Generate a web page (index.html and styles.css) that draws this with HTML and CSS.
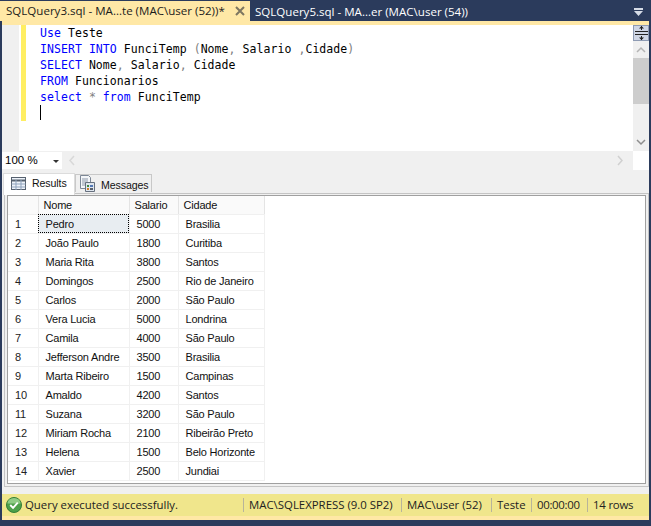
FILE: index.html
```html
<!DOCTYPE html>
<html lang="en">
<head>
    <meta charset="UTF-8">
    <meta name="viewport" content="width=device-width, initial-scale=1.0">
    <title>SQLQuery3.sql</title>
    <link rel="stylesheet" href="styles.css">
</head>
<body>
    <div class="window">
        <div class="doc-tabs">
            <div class="doc-tab active">
                <span>SQLQuery3.sql - MA...te (MAC\user (52))*</span>
                <svg class="close" width="10" height="10" viewBox="0 0 10 10"><path d="M1 1l8 8M9 1l-8 8" stroke="#7d7660" stroke-width="2"/></svg>
            </div>
            <div class="doc-tab">SQLQuery5.sql - MA...er (MAC\user (54))</div>
            <svg class="tab-menu" width="9" height="9" viewBox="0 0 9 9"><path d="M0 1h9v2H0zM0 4h9L4.500 9z" fill="#d5dbe6"/></svg>
        </div>
        <div class="doc-line"></div>

        <div class="editor">
            <div class="gutter"></div>
            <div class="code-area">
                <div class="changed"></div>
                <pre class="code"><span class="kw">Use</span> Teste
<span class="kw">INSERT INTO</span> FunciTemp <span class="op">(</span>Nome<span class="op">,</span> Salario <span class="op">,</span>Cidade<span class="op">)</span>
<span class="kw">SELECT</span> Nome<span class="op">,</span> Salario<span class="op">,</span> Cidade
<span class="kw">FROM</span> Funcionarios
<span class="kw">select</span> <span class="op">*</span> <span class="kw">from</span> FunciTemp
<span class="caret"></span></pre>
            </div>
            <div class="vscroll">
                <div class="split-btn">
                    <svg width="13" height="14" viewBox="0 0 13 14"><path d="M0 5.500h13M0 8.500h13M6.500 0v4M6.500 10v4" stroke="#222" fill="none"/><path d="M4 2.500h5L6.500 0zM4 11.500h5L6.500 14z" fill="#222"/></svg>
                </div>
                <svg class="arrow" width="16" height="17" viewBox="0 0 16 17"><path d="M4 11l4-4 4 4" stroke="#b4b4b4" stroke-width="1.500" fill="none"/></svg>
                <div class="thumb"></div>
                <div class="track"></div>
                <svg class="arrow" width="16" height="17" viewBox="0 0 16 17"><path d="M4 6l4 4 4-4" stroke="#8e8e8e" stroke-width="1.500" fill="none"/></svg>
            </div>
        </div>

        <div class="zoom-row">
            <div class="zoom-box">100 %<span class="zoom-drop"></span></div>
            <svg class="hleft" width="10" height="11" viewBox="0 0 10 11"><path d="M7 1L3 5.500 7 10" stroke="#d8d8d8" stroke-width="1.500" fill="none"/></svg>
            <svg class="hright" width="10" height="11" viewBox="0 0 10 11"><path d="M3 1l4 4.500L3 10" stroke="#d0d0d0" stroke-width="1.500" fill="none"/></svg>
            <div class="corner"></div>
        </div>

        <div class="results">
            <div class="result-tabs">
                <div class="result-tab active">
                    <svg width="15" height="13" viewBox="0 0 15 13"><rect x=".5" y=".5" width="14" height="12" fill="#eef3fa" stroke="#55606e"/><path d="M.5 3.500h14" stroke="#55606e" stroke-width="2"/><path d="M.5 7h14M.5 10h14M5 3v10M10 3v10" stroke="#8fa3bd"/></svg>
                    Results
                </div>
                <div class="result-tab">
                    <svg width="15" height="17" viewBox="0 0 15 17"><path d="M.5.500h8l2 2v11H.5z" fill="#f4f6f9" stroke="#7c8796"/><path d="M2 4h6M2 6h6M2 8h6M2 10h6" stroke="#8d99aa"/><path d="M5.500 7.500h9v9h-9z" fill="#dfe6ef" stroke="#66707e"/><path d="M7 10h2v2H7z" fill="#3d8a3d"/><path d="M10 10h3v2h-3z" fill="#5378b5"/><path d="M7 13h2v2H7z" fill="#d07a2c"/><path d="M10 13h3v2h-3z" fill="#58606c"/></svg>
                    Messages
                </div>
            </div>
            <div class="grid-frame">
                <div class="grid-pane">
                    <table class="grid">
                        <colgroup><col class="c-num"><col class="c-nome"><col class="c-sal"><col class="c-cid"></colgroup>
                        <thead>
                            <tr><th></th><th>Nome</th><th>Salario</th><th>Cidade</th></tr>
                        </thead>
                        <tbody>
                            <tr><td>1</td><td class="selected">Pedro</td><td>5000</td><td>Brasilia</td></tr>
                            <tr><td>2</td><td>João Paulo</td><td>1800</td><td>Curitiba</td></tr>
                            <tr><td>3</td><td>Maria Rita</td><td>3800</td><td>Santos</td></tr>
                            <tr><td>4</td><td>Domingos</td><td>2500</td><td>Rio de Janeiro</td></tr>
                            <tr><td>5</td><td>Carlos</td><td>2000</td><td>São Paulo</td></tr>
                            <tr><td>6</td><td>Vera Lucia</td><td>5000</td><td>Londrina</td></tr>
                            <tr><td>7</td><td>Camila</td><td>4000</td><td>São Paulo</td></tr>
                            <tr><td>8</td><td>Jefferson Andre</td><td>3500</td><td>Brasilia</td></tr>
                            <tr><td>9</td><td>Marta Ribeiro</td><td>1500</td><td>Campinas</td></tr>
                            <tr><td>10</td><td>Amaldo</td><td>4200</td><td>Santos</td></tr>
                            <tr><td>11</td><td>Suzana</td><td>3200</td><td>São Paulo</td></tr>
                            <tr><td>12</td><td>Miriam Rocha</td><td>2100</td><td>Ribeirão Preto</td></tr>
                            <tr><td>13</td><td>Helena</td><td>1500</td><td>Belo Horizonte</td></tr>
                            <tr><td>14</td><td>Xavier</td><td>2500</td><td>Jundiai</td></tr>
                        </tbody>
                    </table>
                </div>
            </div>
        </div>

        <div class="status">
            <svg class="ok" width="16" height="16" viewBox="0 0 17 17"><circle cx="8.500" cy="8.500" r="8" fill="#4da04a" stroke="#2f7a33"/><path d="M1.500 7a7 6 0 0 1 14 0z" fill="#8fcb85"/><path d="M4.500 8.500l3 3 5-5.500" stroke="#fff" stroke-width="2" fill="none"/></svg>
            <span class="status-msg">Query executed successfully.</span>
            <span class="cell s-server">MAC\SQLEXPRESS (9.0 SP2)</span>
            <span class="cell s-user">MAC\user (52)</span>
            <span class="cell s-db">Teste</span>
            <span class="cell s-time">00:00:00</span>
            <span class="cell s-rows">14 rows</span>
        </div>
        <div class="status-line"></div>
    </div>
</body>
</html>
```

FILE: styles.css
```css
* {
    margin: 0;
    padding: 0;
    box-sizing: border-box;
}
html, body {
    height: 100%;
}
body {
    background-color: #2b3b5c;
    overflow: hidden;
}
.window {
    height: 526px;
    padding: 0 2px 6px 2px;
    display: flex;
    flex-direction: column;
}

/* document tabs */
.doc-tabs {
    height: 21px;
    margin-left: -2px;
    display: flex;
    align-items: stretch;
    font: 11.55px "Open Sans", "Noto Sans", sans-serif;
    color: #fff;
    position: relative;
}
.doc-tab {
    padding-left: 5px;
    line-height: 24px;
    white-space: nowrap;
}
.doc-tab.active {
    width: 250px;
    margin-top: 1px;
    line-height: 22px;
    background-color: #ffe8a6;
    color: #1b1b1b;
    padding-left: 6px;
    display: flex;
    justify-content: space-between;
    align-items: center;
    padding-right: 5px;
}
.tab-menu {
    position: absolute;
    right: 6px;
    top: 7px;
}
.doc-line {
    height: 4px;
    background-color: #ffe8a6;
}

/* editor */
.editor {
    height: 126px;
    display: flex;
    background-color: #fff;
}
.gutter {
    width: 17px;
    background-color: #f0f0f0;
}
.code-area {
    flex: 1;
    display: flex;
    align-items: flex-start;
}
.changed {
    width: 5px;
    height: 96px;
    margin-left: 2px;
    background-color: #ffee62;
}
.code {
    margin-left: 14px;
    font: 11.5px/16px "DejaVu Sans Mono", "Liberation Mono", monospace;
    letter-spacing: .06px;
    color: #000;
}
.kw {
    color: #0000ff;
}
.op {
    color: #808080;
}
.caret {
    display: inline-block;
    width: 1px;
    height: 15px;
    background-color: #000;
    vertical-align: top;
}
.vscroll {
    width: 16px;
    display: flex;
    flex-direction: column;
    background-color: #f0f0f0;
}
.split-btn {
    height: 16px;
    background-color: #cfd6e5;
    border: 1px solid #8e9bb3;
    display: flex;
    justify-content: center;
    align-items: center;
}
.split-btn svg {
    flex: none;
}
.arrow {
    flex: none;
}
.thumb {
    height: 46px;
    background-color: #cdcdcd;
}
.track {
    flex: 1;
}

/* zoom row */
.zoom-row {
    height: 19px;
    display: flex;
    align-items: center;
    background-color: #f0f0f0;
}
.zoom-box {
    width: 60px;
    height: 17px;
    background-color: #fff;
    font: 11.5px/17px "Liberation Sans", sans-serif;
    padding-left: 3px;
    position: relative;
}
.zoom-drop {
    position: absolute;
    right: 3px;
    top: 8px;
    border: 3px solid transparent;
    border-top: 3px solid #333;
    border-bottom: 0;
}
.hleft {
    margin-left: 5px;
}
.hright {
    margin-left: auto;
    margin-right: 8px;
}
.corner {
    width: 16px;
    height: 19px;
    background-color: #fff;
}

/* results */
.results {
    flex: 1;
    min-height: 0;
    display: flex;
    flex-direction: column;
    background-color: #f0f0f0;
    padding-bottom: 7px;
}
.result-tabs {
    height: 23px;
    padding: 2px 0 0 1px;
    display: flex;
    align-items: flex-end;
    font: 10.6px "Liberation Sans", sans-serif;
    letter-spacing: -.1px;
    color: #111;
    position: relative;
    z-index: 1;
}
.result-tab {
    height: 18px;
    width: 77px;
    background-color: #f0f0f0;
    border: 1px solid #c8c8c8;
    border-bottom: 0;
    display: flex;
    align-items: center;
    gap: 6px;
    padding: 2px 0 0 4px;
    margin-bottom: 1px;
}
.result-tab svg {
    flex: none;
    margin-top: -2px;
}
.result-tab.active {
    width: 72px;
    height: 22px;
    background-color: #fff;
    border-color: #dcdcdc;
    padding: 0 0 3px 7px;
    gap: 6px;
    margin-bottom: -2px;
}
.result-tab.active svg {
    margin-top: 0;
}
.grid-frame {
    flex: 1;
    margin-left: 2px;
    border: 1px solid #c4c4c4;
    background-color: #f0f0f0;
    padding: 1px 2px 2px 2px;
}
.grid-pane {
    height: 100%;
    background-color: #fff;
    border: 1px solid #a0a0a0;
}
.grid {
    border-collapse: collapse;
    table-layout: fixed;
    width: 256px;
    font: 11px "Liberation Sans", sans-serif;
    letter-spacing: -.2px;
    color: #111;
}
.c-num { width: 30px; }
.c-nome { width: 91px; }
.c-sal { width: 49px; }
.c-cid { width: 86px; }
.grid th, .grid td {
    height: 19px;
    border: 1px solid #f0f0f0;
    border-top: 0;
    border-left: 0;
    text-align: left;
    font-weight: normal;
    white-space: nowrap;
    overflow: hidden;
}
.grid th {
    height: 18px;
    padding: 1px 0 0 5px;
    background-color: #fafafa;
    border-right: 1px solid #e4e4e4;
}
.grid td {
    padding-left: 7px;
}
.grid td:first-child {
    padding-left: 7px;
    color: #222;
}
.grid td.selected {
    background-color: #e8edf1;
    outline: 1px dotted #000;
    outline-offset: -1px;
}

/* status bar */
.status {
    height: 22px;
    background-color: #f0e68c;
    display: flex;
    align-items: center;
    padding: 0 0 1px 4px;
    font: 11.4px "Open Sans", "Noto Sans", sans-serif;
    color: #222;
}
.ok {
    flex: none;
}
.status-msg {
    margin-left: 3px;
    width: 218px;
}
.cell {
    border-left: 1px solid #b8b49a;
    height: 14px;
    line-height: 14px;
    padding-left: 5px;
    white-space: nowrap;
}
.s-server { width: 158px; }
.s-user { width: 90px; }
.s-db { width: 40px; }
.s-time { width: 56px; letter-spacing: -.3px; }
.s-rows { width: 50px; letter-spacing: -.2px; }
.status-line {
    height: 4px;
    background-color: #ffe8a6;
}
```
